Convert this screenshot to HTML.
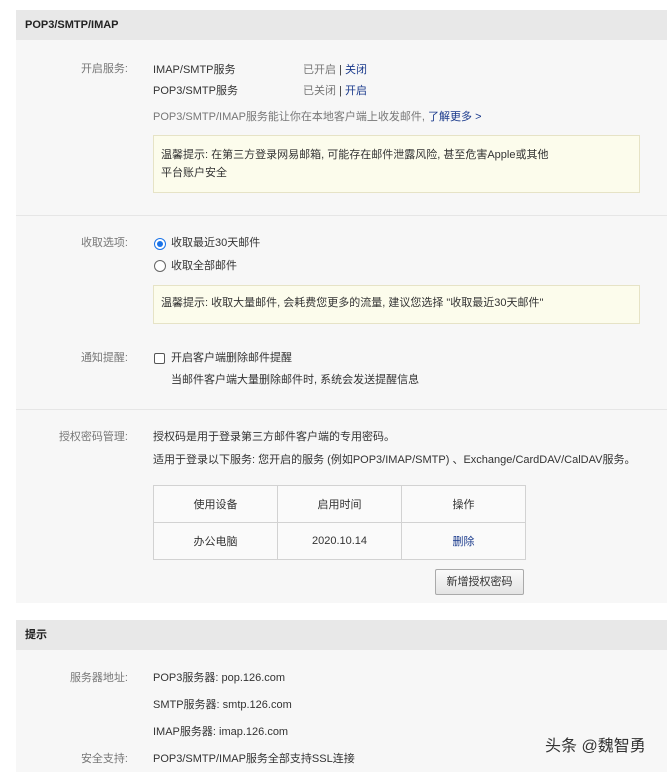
<!DOCTYPE html>
<html><head><meta charset="utf-8"><style>
body{margin:0;width:667px;height:772px;background:#fff;position:relative;overflow:hidden;font-family:"Liberation Sans","Noto Sans CJK SC",sans-serif;font-size:11px;color:#333}
.a{position:absolute;white-space:nowrap;line-height:14px}
.p{position:absolute;background:#f7f7f7;left:16px;right:0}
.h{position:absolute;background:#e8e8e8;left:16px;right:0;height:30px}
.ht{position:absolute;left:25px;font-weight:bold;color:#222;font-size:11px;line-height:14px}
.l{color:#777;text-align:right;width:110px;left:18px}
.hr{position:absolute;left:16px;right:0;height:1px;background:#e6e6e6}
.y{position:absolute;background:#fcfcec;border:1px solid #e6e3c6;left:153px;width:485px}
.b{color:#1a3a8c}
.g{color:#777}
td{border:1px solid #d2d2d2;text-align:center;width:123px;height:36px;padding:0}
</style></head><body>
<div class="p" style="top:10px;height:593px"></div>
<div class="h" style="top:10px"></div>
<div class="ht" style="top:18px">POP3/SMTP/IMAP</div>
<div class="a l" style="top:62px">开启服务:</div>
<div class="a" style="left:153px;top:63px">IMAP/SMTP服务</div>
<div class="a" style="left:303px;top:63px"><span class="g">已开启</span> | <span class="b">关闭</span></div>
<div class="a" style="left:153px;top:84px">POP3/SMTP服务</div>
<div class="a" style="left:303px;top:84px"><span class="g">已关闭</span> | <span class="b">开启</span></div>
<div class="a g" style="left:153px;top:110px">POP3/SMTP/IMAP服务能让你在本地客户端上收发邮件, <span class="b">了解更多 &gt;</span></div>
<div class="y" style="top:135px;height:56px"></div>
<div class="a" style="left:161px;top:148px">温馨提示: 在第三方登录网易邮箱, 可能存在邮件泄露风险, 甚至危害Apple或其他</div>
<div class="a" style="left:161px;top:166px">平台账户安全</div>
<div class="hr" style="top:215px"></div>
<div class="a l" style="top:236px">收取选项:</div>
<div style="position:absolute;left:154px;top:238px;width:10px;height:10px;border:1px solid #1a73e8;border-radius:50%;background:#fff"><div style="position:absolute;left:2px;top:2px;width:6px;height:6px;border-radius:50%;background:#1a73e8"></div></div>
<div class="a" style="left:171px;top:236px">收取最近30天邮件</div>
<div style="position:absolute;left:154px;top:260px;width:10px;height:10px;border:1px solid #666;border-radius:50%;background:#fff"></div>
<div class="a" style="left:171px;top:259px">收取全部邮件</div>
<div class="y" style="top:285px;height:37px"></div>
<div class="a" style="left:161px;top:296px">温馨提示: 收取大量邮件, 会耗费您更多的流量, 建议您选择 "收取最近30天邮件"</div>
<div class="a l" style="top:351px">通知提醒:</div>
<div style="position:absolute;left:154px;top:353px;width:9px;height:9px;border:1px solid #555;border-radius:2px;background:#fff"></div>
<div class="a" style="left:171px;top:351px">开启客户端删除邮件提醒</div>
<div class="a" style="left:171px;top:373px">当邮件客户端大量删除邮件时, 系统会发送提醒信息</div>
<div class="hr" style="top:409px"></div>
<div class="a l" style="top:430px">授权密码管理:</div>
<div class="a" style="left:153px;top:430px">授权码是用于登录第三方邮件客户端的专用密码。</div>
<div class="a" style="left:153px;top:453px">适用于登录以下服务: 您开启的服务 (例如POP3/IMAP/SMTP) 、Exchange/CardDAV/CalDAV服务。</div>
<table style="position:absolute;left:153px;top:485px;border-collapse:collapse;background:#fafafa;font-size:11px;color:#333">
<tr><td>使用设备</td><td>启用时间</td><td>操作</td></tr>
<tr><td>办公电脑</td><td>2020.10.14</td><td class="b">删除</td></tr></table>
<div style="position:absolute;left:435px;top:569px;width:87px;height:24px;border:1px solid #aaa;border-radius:2px;background:linear-gradient(#fafafa,#e4e4e4);text-align:center;line-height:24px">新增授权密码</div>
<div class="p" style="top:650px;height:122px"></div>
<div class="h" style="top:620px"></div>
<div class="ht" style="top:628px">提示</div>
<div class="a l" style="top:671px">服务器地址:</div>
<div class="a" style="left:153px;top:671px">POP3服务器: pop.126.com</div>
<div class="a" style="left:153px;top:698px">SMTP服务器: smtp.126.com</div>
<div class="a" style="left:153px;top:725px">IMAP服务器: imap.126.com</div>
<div class="a l" style="top:752px">安全支持:</div>
<div class="a" style="left:153px;top:752px">POP3/SMTP/IMAP服务全部支持SSL连接</div>
<div class="a" style="left:545px;top:737px;font-size:16px;line-height:20px;color:#333">头条 @魏智勇</div>
</body></html>
